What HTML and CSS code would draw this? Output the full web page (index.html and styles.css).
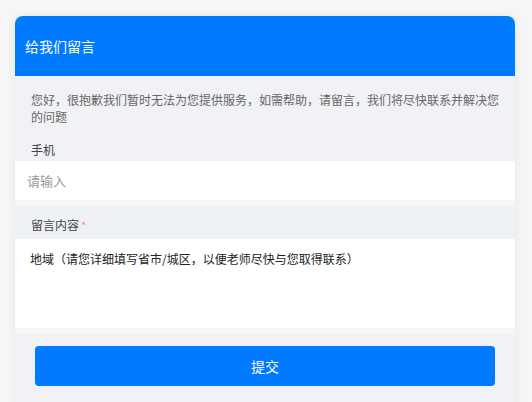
FILE: index.html
```html
<!DOCTYPE html>
<html lang="zh-CN">
<head>
<meta charset="utf-8">
<title>给我们留言</title>
<link rel="stylesheet" href="styles.css">
</head>
<body>
<div class="card">
  <div class="card-header">给我们留言</div>
  <div class="card-body">
    <p class="notice">您好，很抱歉我们暂时无法为您提供服务，如需帮助，请留言，我们将尽快联系并解决您的问题</p>
    <label class="field-label field-label-first" for="phone">手机</label>
    <div class="field">
      <input id="phone" class="text-input" type="text" placeholder="请输入">
    </div>
    <label class="field-label field-label-band" for="msg">留言内容<span class="req">*</span></label>
    <div class="field">
      <textarea id="msg" class="text-area">地域（请您详细填写省市/城区，以便老师尽快与您取得联系）</textarea>
    </div>
    <div class="actions">
      <button class="submit" type="button">提交</button>
    </div>
  </div>
</div>
</body>
</html>
```

FILE: styles.css
```css
* { box-sizing: border-box; }

html, body {
  margin: 0;
  padding: 0;
}

body {
  background: #f6f6f6;
  font-family: "Noto Sans CJK SC", "Noto Sans", "Liberation Sans", sans-serif;
  padding: 16px 17px 0 15px;
}

.card {
  width: 500px;
  border-radius: 8px 8px 0 0;
  overflow: hidden;
  background: #f0f2f5;
  box-shadow: 0 0 10px rgba(0, 0, 0, 0.07);
}

.card-header {
  height: 60px;
  line-height: 60px;
  padding-left: 10px;
  background: #007aff;
  color: #ffffff;
  font-size: 14px;
}

.card-body {
  display: flex;
  flex-direction: column;
  padding-bottom: 30px;
}

.notice {
  margin: 0;
  padding: 15px 16px 0;
  font-size: 12px;
  line-height: 17px;
  color: #666666;
}

.field-label {
  display: block;
  padding: 16px 16px 3px;
  font-size: 12px;
  line-height: 17px;
  color: #444444;
}

.field-label-band {
  padding: 10px 16px 5px;
  background: #eff2f5;
}

.req {
  color: #f08a8a;
  margin-left: 2px;
  font-size: 11px;
}

.field {
  background: #ffffff;
  border-bottom: 6px solid #f6f7f9;
}

.text-input {
  display: block;
  width: 100%;
  height: 39px;
  border: 0;
  outline: none;
  padding: 0 12px;
  font-family: inherit;
  font-size: 13px;
  color: #333333;
  background: #ffffff;
}

.text-input::placeholder {
  color: #999999;
}

.text-area {
  display: block;
  width: 100%;
  height: 89px;
  border: 0;
  outline: none;
  resize: none;
  padding: 10px 15px;
  font-family: inherit;
  font-size: 12px;
  line-height: 20px;
  color: #222222;
  background: #ffffff;
}

.actions {
  padding: 12px 20px 0;
}

.submit {
  display: block;
  width: 100%;
  height: 40px;
  border: 0;
  border-radius: 4px;
  background: #007aff;
  color: #ffffff;
  font-family: inherit;
  font-size: 14px;
  cursor: pointer;
}
```
